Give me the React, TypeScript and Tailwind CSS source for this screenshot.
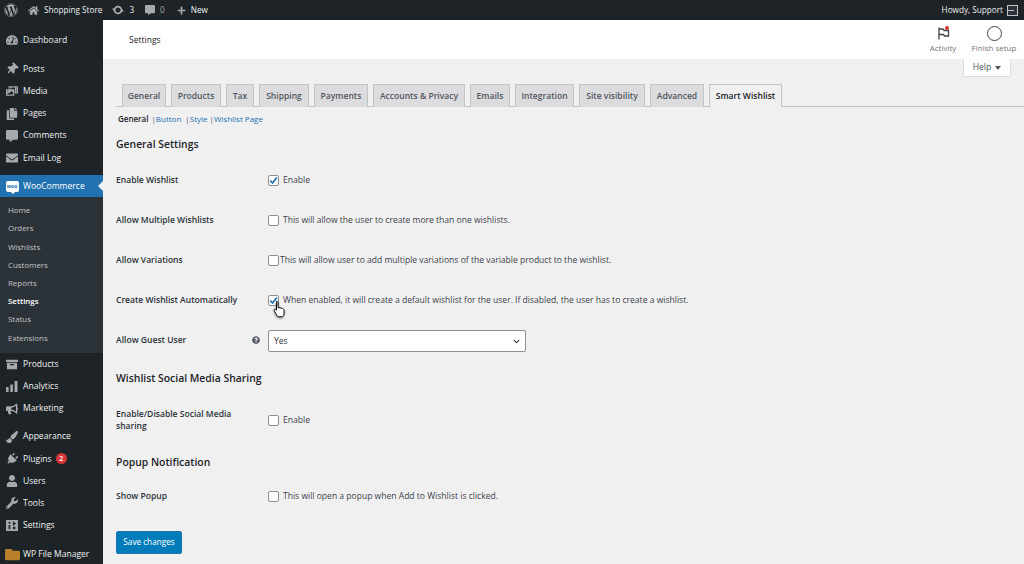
import React from "react";
import { FaWordpress, FaHome, FaCommentAlt, FaPlus, FaTachometerAlt, FaThumbtack, FaPhotoVideo, FaCopy, FaEnvelope, FaBullhorn, FaPaintBrush, FaPlug, FaUser, FaWrench, FaFolder, FaQuestionCircle, FaChevronDown } from "react-icons/fa";

const Box = () => (
  <svg width="12" height="11" viewBox="0 0 14 13"><path fill="#a7aaad" d="M0 1h14v2.500H0zM1 4.500h12V12H1zM4.500 6v1.500h5V6z" fillRule="evenodd" /></svg>
);
const Bars = () => (
  <svg width="12" height="11" viewBox="0 0 14 13"><path fill="#a7aaad" d="M0 7h3v6H0zM5 4h3v9H5zM10 0h3.500v13H10z" /></svg>
);
const Sliders = () => (
  <svg width="12" height="11" viewBox="0 0 14 13"><path fill="#a7aaad" fillRule="evenodd" d="M0 0h14v13H0zM3 6h2v5H3zM3 2h2v2.500H3zM8 2h2v1.500h1.500V5H10v1.500H8zM8 8h3v3H8z" /></svg>
);
const Updates = () => (
  <svg width="12" height="10" viewBox="0 0 12 10" className="ml-[10px]">
    <circle cx="6" cy="5" r="3.400" fill="none" stroke="#a7aaad" strokeWidth="1.800" />
    <path d="M0 3.500h3.500L2 6zM12 6.500H8.500L10 4z" fill="#a7aaad" />
  </svg>
);
const Woo = () => (
  <span className="relative flex h-[11px] w-[13px] items-center justify-center rounded-[2px] bg-white text-[5px] font-bold leading-none text-[#2271b1]">
    woo
    <span className="absolute -bottom-[2px] left-[5px] h-0 w-0 border-x-[2px] border-t-[2px] border-x-transparent border-t-white" />
  </span>
);

const Item = ({ icon, label, badge }: { icon: React.ReactNode; label: string; badge?: string }) => (
  <div className="flex h-[22.200px] items-center text-[#f0f0f1]">
    <span className="flex w-[23px] shrink-0 justify-center pl-[1px] text-[12px] text-[#a7aaad]">{icon}</span>
    <span className="whitespace-nowrap">{label}</span>
    {badge && <span className="ml-[4px] flex h-[11px] w-[11px] items-center justify-center rounded-full bg-[#d63638] text-[7px] font-semibold text-white">{badge}</span>}
  </div>
);

const tabs = [
  ["General", "w-[44px]"], ["Products", "w-[50px]"], ["Tax", "w-[28px]"], ["Shipping", "w-[50px]"], ["Payments", "w-[54px]"],
  ["Accounts & Privacy", "w-[92px]"], ["Emails", "w-[40px]"], ["Integration", "w-[59px]"], ["Site visibility", "w-[66px]"], ["Advanced", "w-[54px]"],
];

const Check = ({ on }: { on?: boolean }) => (
  <span className="flex h-[11px] w-[11px] shrink-0 items-center justify-center rounded-[2px] border border-[#8c8f94] bg-white">
    {on && <svg width="9" height="9" viewBox="0 0 9 9"><path d="M1.200 4.700 3.500 7 7.800 1.500" fill="none" stroke="#2271b1" strokeWidth="1.700" /></svg>}
  </span>
);

const Row = ({ label, h, on, text, textClass = "ml-[4px]" }: { label: React.ReactNode; h: string; on?: boolean; text: string; textClass?: string }) => (
  <div className={"flex items-center " + h}>
    <div className="w-[152px] shrink-0 font-semibold text-[#2c3338]">{label}</div>
    <Check on={on} />
    <span className={"whitespace-nowrap text-[#3c434a] " + textClass}>{text}</span>
  </div>
);

const Heading = ({ children, h }: { children: React.ReactNode; h: string }) => (
  <div className={"flex items-center text-[10.400px] font-semibold text-[#1d2327] " + h}>{children}</div>
);

export default function App() {
  return (
    <div className="flex h-[564px] w-[1024px] flex-col overflow-hidden bg-[#f0f0f1] text-[8.550px] [font-family:'Open_Sans',sans-serif]">
      <header className="flex h-[20px] shrink-0 items-center bg-[#1d2327] text-[8.200px] text-[#f0f0f1]">
        <FaWordpress className="ml-[4px] text-[14px] text-[#a7aaad]" />
        <FaHome className="ml-[10px] text-[11px] text-[#a7aaad]" />
        <span className="ml-[5px] pt-[1px]">Shopping Store</span>
        <Updates />
        <span className="ml-[5px] pt-[1px]">3</span>
        <FaCommentAlt className="ml-[11px] text-[10px] text-[#a7aaad]" />
        <span className="ml-[5px] pt-[1px] text-[#a7aaad]">0</span>
        <FaPlus className="ml-[12px] text-[9px] text-[#a7aaad]" />
        <span className="ml-[5px] pt-[1px]">New</span>
        <span className="ml-auto pt-[1px]">Howdy, Support</span>
        <span className="ml-[4px] mr-[6px] flex h-[11px] w-[11px] items-center border border-[#c3c4c7] bg-[#2c3338]"><span className="h-[1px] w-[6px] bg-[#c3c4c7]" /></span>
      </header>
      <div className="flex min-h-0 flex-1">
        <nav className="w-[103px] shrink-0 bg-[#1d2327] pt-[9px]">
          <Item icon={<FaTachometerAlt />} label="Dashboard" />
          <div className="h-[7px]" />
          <Item icon={<FaThumbtack className="rotate-45" />} label="Posts" />
          <Item icon={<FaPhotoVideo />} label="Media" />
          <Item icon={<FaCopy />} label="Pages" />
          <Item icon={<FaCommentAlt />} label="Comments" />
          <Item icon={<FaEnvelope />} label="Email Log" />
          <div className="h-[6px]" />
          <div className="relative flex h-[22px] items-center bg-[#2271b1] text-white">
            <span className="flex w-[23px] shrink-0 justify-center pl-[1px]"><Woo /></span>
            <span>WooCommerce</span>
            <span className="absolute right-0 top-[6px] h-0 w-0 border-y-[5px] border-r-[5px] border-y-transparent border-r-[#f0f0f1]" />
          </div>
          <div className="flex h-[156px] flex-col bg-[#2c3338] pt-[5px] text-[7.900px] text-[#c3c4c7]">
            {["Home", "Orders", "Wishlists", "Customers", "Reports", "Settings", "Status", "Extensions"].map((s) => (
              <div key={s} className={"flex h-[18.200px] items-center pl-[8px] " + (s === "Settings" ? "font-semibold text-white" : "")}>{s}</div>
            ))}
          </div>
          <Item icon={<Box />} label="Products" />
          <Item icon={<Bars />} label="Analytics" />
          <Item icon={<FaBullhorn />} label="Marketing" />
          <div className="h-[6px]" />
          <Item icon={<FaPaintBrush />} label="Appearance" />
          <Item icon={<FaPlug className="rotate-45" />} label="Plugins" badge="2" />
          <Item icon={<FaUser />} label="Users" />
          <Item icon={<FaWrench />} label="Tools" />
          <Item icon={<Sliders />} label="Settings" />
          <div className="h-[7px]" />
          <Item icon={<FaFolder className="text-[15px] text-[#b9802c]" />} label="WP File Manager" />
        </nav>
        <main className="relative flex min-w-0 flex-1 flex-col">
          <div className="flex h-[39px] shrink-0 items-center justify-between bg-white pl-[26px]">
            <span className="pt-[2px] text-[#1d2327]">Settings</span>
            <div className="flex h-full text-[8px] text-[#757575]">
              <div className="flex w-[42px] flex-col items-center pt-[6px]">
                <span className="relative block h-[15px]">
                  <svg width="13" height="14" viewBox="0 0 13 14"><path d="M2 1.500V13.500M2 3h4l1 1.500h4.500V10H7.500L6.500 8.500H2" fill="none" stroke="#3c434a" strokeWidth="1.300" /></svg>
                  <span className="absolute right-[1px] top-0 h-[4px] w-[4px] rounded-full bg-[#d63638]" />
                </span>
                <span className="mt-[1px] leading-[12px]">Activity</span>
              </div>
              <div className="flex w-[60px] flex-col items-center pt-[6px]">
                <span className="h-[15px] w-[15px] rounded-full border border-[#3c434a]" />
                <span className="mt-[1px] whitespace-nowrap leading-[12px]">Finish setup</span>
              </div>
            </div>
          </div>
          <div className="absolute right-[13px] top-[39px] flex h-[18px] w-[48px] items-center justify-center gap-[4px] rounded-b-[2px] border border-t-0 border-[#dcdcde] bg-white text-[#50575e]">
            Help <span className="h-0 w-0 border-x-[3px] border-t-[4px] border-x-transparent border-t-[#50575e]" />
          </div>
          <div className="flex min-h-0 flex-1 flex-col pl-[13px] pt-[25px]">
            <div className="flex h-[23px] gap-[5px] border-b border-[#c3c4c7] pl-[6px]">
              {tabs.map(([t, w]) => (
                <div key={t} className={"flex h-[23px] items-center justify-center whitespace-nowrap border border-b-0 border-[#c3c4c7] bg-[#dcdcde] font-semibold text-[#50575e] " + w}>{t}</div>
              ))}
              <div className="flex h-[23px] w-[73px] items-center justify-center whitespace-nowrap border border-b-0 border-[#c3c4c7] bg-[#f0f0f1] font-semibold text-[#1d2327]">Smart Wishlist</div>
            </div>
            <div className="flex h-[24px] items-center pl-[2px] text-[8px] text-[#2271b1]">
              <span className="font-semibold text-[#1d2327]">General</span>
              <span className="ml-[3px] text-[#50575e]">|</span><span>Button</span>
              <span className="ml-[4px] text-[#50575e]">|</span><span>Style</span>
              <span className="ml-[2px] text-[#50575e]">|</span><span>Wishlist Page</span>
            </div>
            <Heading h="h-[27px]">General Settings</Heading>
            <div className="h-[3px]" />
            <Row h="h-[39px]" label="Enable Wishlist" on text="Enable" />
            <Row h="h-[40px]" label="Allow Multiple Wishlists" text="This will allow the user to create more than one wishlists." />
            <Row h="h-[40px]" label="Allow Variations" text="This will allow user to add multiple variations of the variable product to the wishlist." textClass="ml-[1px]" />
            <Row h="h-[40px]" label="Create Wishlist Automatically" on text="When enabled, it will create a default wishlist for the user. If disabled, the user has to create a wishlist." />
            <div className="flex h-[40px] items-center">
              <div className="flex w-[152px] shrink-0 items-center justify-between pr-[8px] font-semibold text-[#2c3338]">Allow Guest User <FaQuestionCircle className="text-[8px] text-[#50575e]" /></div>
              <div className="mt-[2px] flex h-[22px] w-[258px] items-center justify-between rounded-[2px] border border-[#8c8f94] bg-white px-[5px] text-[#2c3338]">Yes <FaChevronDown className="text-[7px]" /></div>
            </div>
            <Heading h="h-[38px]">Wishlist Social Media Sharing</Heading>
            <Row h="h-[45px]" label={<span className="block leading-[11.500px]">Enable/Disable Social Media<br />sharing</span>} text="Enable" />
            <Heading h="h-[39px]">Popup Notification</Heading>
            <Row h="h-[29px]" label="Show Popup" text="This will open a popup when Add to Wishlist is clicked." />
            <div className="mt-[20px] flex h-[23px] w-[66px] items-center justify-center rounded-[2px] border border-[#2271b1] bg-[#007cba] text-[8.200px] font-medium text-white">Save changes</div>
          </div>
          <svg className="absolute left-[170px] top-[280px] drop-shadow-[0_1px_1px_rgba(0,0,0,0.5)]" width="13" height="18" viewBox="0 0 13 18">
            <path d="M3.500 1.200c.9 0 1.500.6 1.500 1.500v5l1-.2 1 .3 1 .2 1.500.5c.8.4 1.500 1 1.500 2v3c0 1.500-1 3.300-2.500 3.300H6c-1 0-1.700-.6-2.300-1.500L1.200 10.500c-.5-.9.6-1.900 1.500-1.200l.8.800V2.700c0-.9.100-1.500 0-1.500z" fill="#fff" stroke="#111" strokeWidth="1" />
          </svg>
        </main>
      </div>
    </div>
  );
}
